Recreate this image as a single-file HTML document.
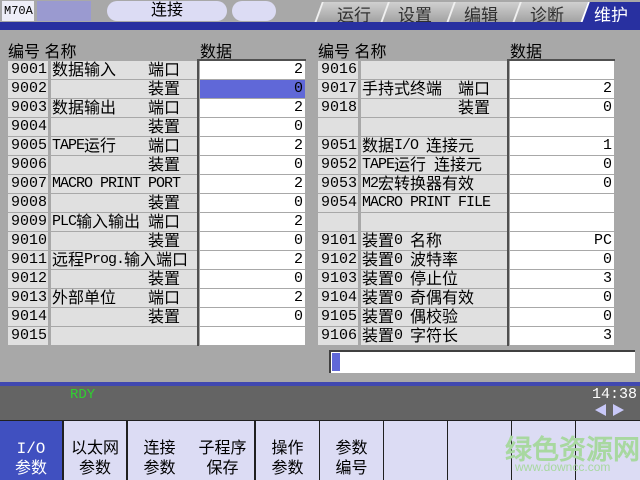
<!DOCTYPE html>
<html><head><meta charset="utf-8"><style>
*{margin:0;padding:0;box-sizing:border-box}
body{width:640px;height:480px;overflow:hidden;background:#a8a8a8;position:relative;font-family:"Liberation Mono","WenQuanYi Zen Hei","Noto Sans CJK SC",monospace;color:#000}
.a{position:absolute}
.n{position:absolute;height:18px;background:#e0e0e0;font-size:15px;line-height:18px;text-align:right;padding-right:1px;white-space:nowrap}
.nm{position:absolute;height:18px;background:#e0e0e0;font-size:15px;line-height:18px;white-space:nowrap;overflow:visible;padding-left:1px}
.nm i{font-style:normal;font-size:16px;font-family:"WenQuanYi Zen Hei","Noto Sans CJK SC",sans-serif;line-height:18px;display:inline-block;vertical-align:top;height:18px;position:relative;top:-2px}
.nm u{text-decoration:none;display:inline-block;vertical-align:top;height:18px;line-height:18px;white-space:pre;font-size:15px;letter-spacing:-1px}
.nm s{text-decoration:none;position:absolute;left:97px;top:-2px;font-size:16px;line-height:18px;font-family:"WenQuanYi Zen Hei","Noto Sans CJK SC",sans-serif}
.d{position:absolute;height:18px;background:#fff;font-size:15px;line-height:18px;text-align:right;padding-right:2px}
.k{position:absolute;top:421px;height:59px;width:63px;background:#dcdcf4;font-size:16px;line-height:20px;text-align:center;padding-top:18px;font-family:"Liberation Mono","WenQuanYi Zen Hei",monospace}
.tab{position:absolute;top:2px;height:21px;width:72px;background:linear-gradient(#d0d0d0,#a0a0a0);transform:skewX(-20deg);border-left:2px solid #f0f0f0}
.tt{position:absolute;top:1px;font-size:17px;color:#303030;font-family:"WenQuanYi Zen Hei",sans-serif}
</style></head><body>
<div class="a" style="left:0;top:0;width:640px;height:23px;background:#a8a8a8"></div>
<div class="a" style="left:2px;top:1px;width:32px;height:20px;background:#eeeef8;font-size:12px;line-height:20px;padding-left:2px">M70A</div>
<div class="a" style="left:37px;top:1px;width:54px;height:20px;background:#9a9ad0"></div>
<div class="a" style="left:107px;top:1px;width:120px;height:20px;background:#dcdcf4;border-radius:10px;text-align:center;font-size:16px;line-height:20px;font-family:'WenQuanYi Zen Hei',sans-serif">连接</div>
<div class="a" style="left:232px;top:1px;width:44px;height:20px;background:#dcdcf4;border-radius:10px"></div>
<div class="tab" style="left:318px"></div><div class="tt" style="left:337px">运行</div>
<div class="tab" style="left:384px"></div><div class="tt" style="left:398px">设置</div>
<div class="tab" style="left:450px"></div><div class="tt" style="left:464px">编辑</div>
<div class="tab" style="left:516px"></div><div class="tt" style="left:530px">诊断</div>
<div class="tab" style="left:584px;width:70px;background:#2830a0;border-left:2px solid #fff"></div><div class="tt" style="left:594px;color:#fff">维护</div>
<div class="a" style="left:0;top:22px;width:640px;height:8px;background:#2830a0"></div>
<div class="a" style="left:8px;top:38px;font-size:16px;font-family:'WenQuanYi Zen Hei',sans-serif">编号 名称</div>
<div class="a" style="left:200px;top:38px;font-size:16px;font-family:'WenQuanYi Zen Hei',sans-serif">数据</div>
<div class="a" style="left:318px;top:38px;font-size:16px;font-family:'WenQuanYi Zen Hei',sans-serif">编号 名称</div>
<div class="a" style="left:510px;top:38px;font-size:16px;font-family:'WenQuanYi Zen Hei',sans-serif">数据</div>
<div class="a" style="left:197px;top:59px;width:2px;height:287px;background:#505050"></div>
<div class="a" style="left:507px;top:59px;width:2px;height:287px;background:#505050"></div>
<div class="a" style="left:199px;top:59px;width:107px;height:2px;background:#505050"></div>
<div class="a" style="left:509px;top:59px;width:106px;height:2px;background:#505050"></div>

<div class="n" style="left:8px;top:61px;width:40px">9001</div><div class="nm" style="left:51px;top:61px;width:146px"><i>数据输入</i><s>端口</s></div><div class="d" style="left:200px;top:61px;width:105px">2</div>
<div class="n" style="left:8px;top:80px;width:40px">9002</div><div class="nm" style="left:51px;top:80px;width:146px"><s>装置</s></div><div class="d" style="left:200px;top:80px;width:105px;background:#6068d8">0</div>
<div class="n" style="left:8px;top:99px;width:40px">9003</div><div class="nm" style="left:51px;top:99px;width:146px"><i>数据输出</i><s>端口</s></div><div class="d" style="left:200px;top:99px;width:105px">2</div>
<div class="n" style="left:8px;top:118px;width:40px">9004</div><div class="nm" style="left:51px;top:118px;width:146px"><s>装置</s></div><div class="d" style="left:200px;top:118px;width:105px">0</div>
<div class="n" style="left:8px;top:137px;width:40px">9005</div><div class="nm" style="left:51px;top:137px;width:146px"><u>TAPE</u><i>运行</i><s>端口</s></div><div class="d" style="left:200px;top:137px;width:105px">2</div>
<div class="n" style="left:8px;top:156px;width:40px">9006</div><div class="nm" style="left:51px;top:156px;width:146px"><s>装置</s></div><div class="d" style="left:200px;top:156px;width:105px">0</div>
<div class="n" style="left:8px;top:175px;width:40px">9007</div><div class="nm" style="left:51px;top:175px;width:146px"><u>MACRO PRINT PORT</u></div><div class="d" style="left:200px;top:175px;width:105px">2</div>
<div class="n" style="left:8px;top:194px;width:40px">9008</div><div class="nm" style="left:51px;top:194px;width:146px"><s>装置</s></div><div class="d" style="left:200px;top:194px;width:105px">0</div>
<div class="n" style="left:8px;top:213px;width:40px">9009</div><div class="nm" style="left:51px;top:213px;width:146px"><u>PLC</u><i>输入输出</i><s>端口</s></div><div class="d" style="left:200px;top:213px;width:105px">2</div>
<div class="n" style="left:8px;top:232px;width:40px">9010</div><div class="nm" style="left:51px;top:232px;width:146px"><s>装置</s></div><div class="d" style="left:200px;top:232px;width:105px">0</div>
<div class="n" style="left:8px;top:251px;width:40px">9011</div><div class="nm" style="left:51px;top:251px;width:146px"><i>远程</i><u>Prog.</u><i>输入端口</i></div><div class="d" style="left:200px;top:251px;width:105px">2</div>
<div class="n" style="left:8px;top:270px;width:40px">9012</div><div class="nm" style="left:51px;top:270px;width:146px"><s>装置</s></div><div class="d" style="left:200px;top:270px;width:105px">0</div>
<div class="n" style="left:8px;top:289px;width:40px">9013</div><div class="nm" style="left:51px;top:289px;width:146px"><i>外部单位</i><s>端口</s></div><div class="d" style="left:200px;top:289px;width:105px">2</div>
<div class="n" style="left:8px;top:308px;width:40px">9014</div><div class="nm" style="left:51px;top:308px;width:146px"><s>装置</s></div><div class="d" style="left:200px;top:308px;width:105px">0</div>
<div class="n" style="left:8px;top:327px;width:40px">9015</div><div class="nm" style="left:51px;top:327px;width:146px"></div><div class="d" style="left:200px;top:327px;width:105px"></div>

<div class="n" style="left:318px;top:61px;width:40px">9016</div><div class="nm" style="left:361px;top:61px;width:146px"></div><div class="d" style="left:510px;top:61px;width:104px"></div>
<div class="n" style="left:318px;top:80px;width:40px">9017</div><div class="nm" style="left:361px;top:80px;width:146px"><i>手持式终端</i><s>端口</s></div><div class="d" style="left:510px;top:80px;width:104px">2</div>
<div class="n" style="left:318px;top:99px;width:40px">9018</div><div class="nm" style="left:361px;top:99px;width:146px"><s>装置</s></div><div class="d" style="left:510px;top:99px;width:104px">0</div>
<div class="n" style="left:318px;top:118px;width:40px"></div><div class="nm" style="left:361px;top:118px;width:146px"></div><div class="d" style="left:510px;top:118px;width:104px"></div>
<div class="n" style="left:318px;top:137px;width:40px">9051</div><div class="nm" style="left:361px;top:137px;width:146px"><i>数据</i><u>I/O </u><i>连接元</i></div><div class="d" style="left:510px;top:137px;width:104px">1</div>
<div class="n" style="left:318px;top:156px;width:40px">9052</div><div class="nm" style="left:361px;top:156px;width:146px"><u>TAPE</u><i>运行</i><u> </u><i>连接元</i></div><div class="d" style="left:510px;top:156px;width:104px">0</div>
<div class="n" style="left:318px;top:175px;width:40px">9053</div><div class="nm" style="left:361px;top:175px;width:146px"><u>M2</u><i>宏转换器有效</i></div><div class="d" style="left:510px;top:175px;width:104px">0</div>
<div class="n" style="left:318px;top:194px;width:40px">9054</div><div class="nm" style="left:361px;top:194px;width:146px"><u>MACRO PRINT FILE</u></div><div class="d" style="left:510px;top:194px;width:104px"></div>
<div class="n" style="left:318px;top:213px;width:40px"></div><div class="nm" style="left:361px;top:213px;width:146px"></div><div class="d" style="left:510px;top:213px;width:104px"></div>
<div class="n" style="left:318px;top:232px;width:40px">9101</div><div class="nm" style="left:361px;top:232px;width:146px"><i>装置</i><u>0 </u><i>名称</i></div><div class="d" style="left:510px;top:232px;width:104px">PC</div>
<div class="n" style="left:318px;top:251px;width:40px">9102</div><div class="nm" style="left:361px;top:251px;width:146px"><i>装置</i><u>0 </u><i>波特率</i></div><div class="d" style="left:510px;top:251px;width:104px">0</div>
<div class="n" style="left:318px;top:270px;width:40px">9103</div><div class="nm" style="left:361px;top:270px;width:146px"><i>装置</i><u>0 </u><i>停止位</i></div><div class="d" style="left:510px;top:270px;width:104px">3</div>
<div class="n" style="left:318px;top:289px;width:40px">9104</div><div class="nm" style="left:361px;top:289px;width:146px"><i>装置</i><u>0 </u><i>奇偶有效</i></div><div class="d" style="left:510px;top:289px;width:104px">0</div>
<div class="n" style="left:318px;top:308px;width:40px">9105</div><div class="nm" style="left:361px;top:308px;width:146px"><i>装置</i><u>0 </u><i>偶校验</i></div><div class="d" style="left:510px;top:308px;width:104px">0</div>
<div class="n" style="left:318px;top:327px;width:40px">9106</div><div class="nm" style="left:361px;top:327px;width:146px"><i>装置</i><u>0 </u><i>字符长</i></div><div class="d" style="left:510px;top:327px;width:104px">3</div>

<div class="a" style="left:329px;top:350px;width:306px;height:23px;background:#fff;border-top:2px solid #404040;border-left:2px solid #404040"></div>
<div class="a" style="left:332px;top:353px;width:8px;height:18px;background:#6068d8"></div>

<div class="a" style="left:0;top:382px;width:640px;height:4px;background:#4048b0"></div>
<div class="a" style="left:0;top:386px;width:640px;height:35px;background:#646464"></div>
<div class="a" style="left:70px;top:387px;font-size:14px;color:#30d030">RDY</div>
<div class="a" style="left:592px;top:386px;font-size:15px;color:#fff">14:38</div>
<div class="a" style="left:595px;top:404px;width:0;height:0;border-top:6px solid transparent;border-bottom:6px solid transparent;border-right:11px solid #c8c8f8"></div>
<div class="a" style="left:613px;top:404px;width:0;height:0;border-top:6px solid transparent;border-bottom:6px solid transparent;border-left:11px solid #c8c8f8"></div>

<div class="a" style="left:0;top:420px;width:640px;height:60px;background:#202020"></div>
<div class="k" style="left:0;width:62px;background:#4050c0;color:#fff">I/O<br>参数</div>
<div class="k" style="left:64px;width:62px">以太网<br>参数</div>
<div class="k" style="left:128px">连接<br>参数</div>
<div class="k" style="left:191px;width:63px">子程序<br>保存</div>
<div class="k" style="left:256px">操作<br>参数</div>
<div class="k" style="left:320px">参数<br>编号</div>
<div class="k" style="left:384px"></div>
<div class="k" style="left:448px"></div>
<div class="k" style="left:512px"></div>
<div class="k" style="left:576px;width:64px"></div>
<div class="a" style="left:505px;top:428px;font-size:27px;color:#a8d8a0;font-family:'WenQuanYi Zen Hei',sans-serif;font-weight:bold">绿色资源网</div>
<div class="a" style="left:515px;top:460px;font-size:12px;color:#a8d8a0;font-family:'Liberation Sans',sans-serif">www.downcc.com</div>
</body></html>
